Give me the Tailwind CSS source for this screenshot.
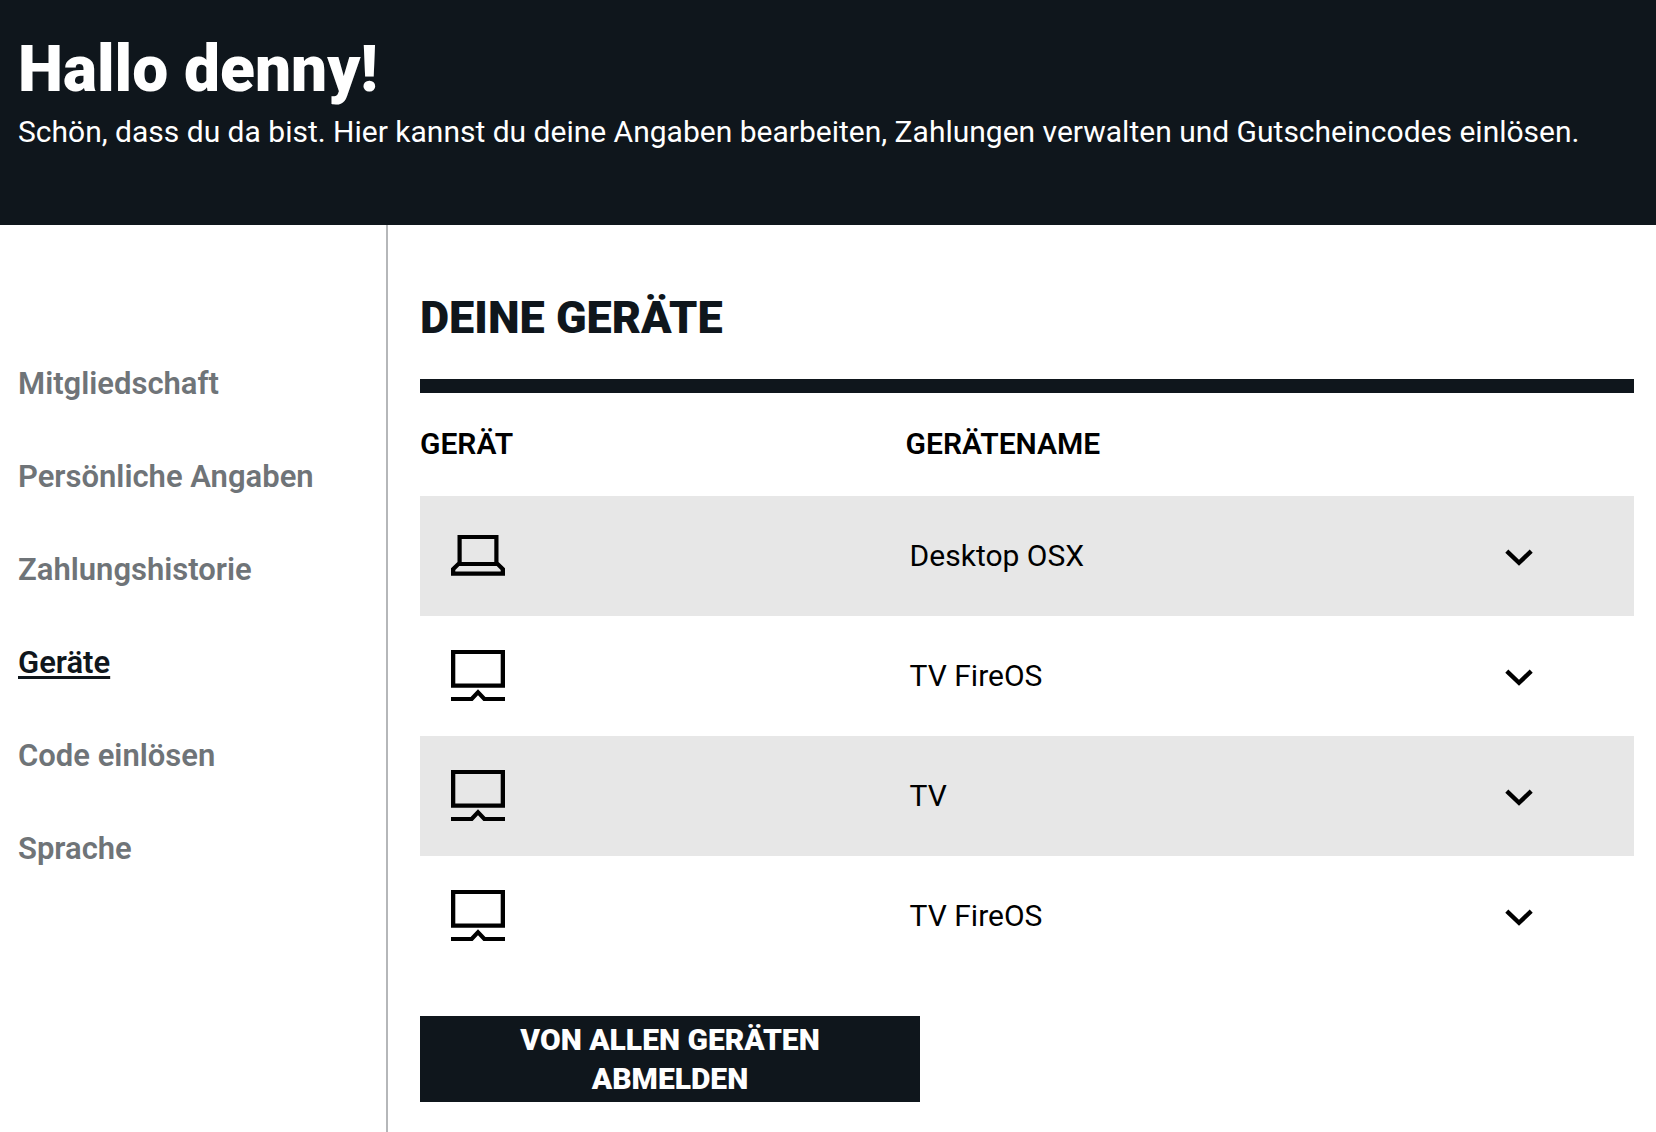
<!DOCTYPE html>
<html lang="de">
    <head>
        <meta charset="UTF-8" />
        <meta name="viewport" content="width=device-width, initial-scale=1.0" />
        <title>Mein Konto - Geräte</title>
        <script src="https://cdn.jsdelivr.net/npm/@tailwindcss/browser@4"></script>
    </head>
    <body
        class="min-h-screen flex flex-col bg-white text-black font-['Roboto',sans-serif] text-[30px] leading-10"
    >
        <!-- Header Section -->
        <header class="bg-[#0f161c] text-white px-[18px] pt-[38px] pb-[73px]">
            <h1 class="text-[64px] leading-16 font-black">Hallo denny!</h1>
            <p class="mt-2.5">
                Schön, dass du da bist. Hier kannst du deine Angaben bearbeiten,
                Zahlungen verwalten und Gutscheincodes einlösen.
            </p>
        </header>

        <div class="flex flex-1">
            <!-- Account Navigation -->
            <nav
                class="w-[388px] shrink-0 border-r-2 border-[#b5b7b9] pl-[18px] pt-[139px]"
            >
                <ul class="flex flex-col gap-[53px] text-[31px] leading-10 font-semibold text-[#6f7478]">
                    <li><a href="#mitgliedschaft">Mitgliedschaft</a></li>
                    <li><a href="#angaben">Persönliche Angaben</a></li>
                    <li><a href="#zahlungen">Zahlungshistorie</a></li>
                    <li>
                        <a
                            href="#geraete"
                            aria-current="page"
                            class="text-[#0f161c] underline decoration-3 underline-offset-3"
                            >Geräte</a
                        >
                    </li>
                    <li><a href="#code">Code einlösen</a></li>
                    <li><a href="#sprache">Sprache</a></li>
                </ul>
            </nav>

            <!-- Devices -->
            <main class="flex-1 pl-8 pr-[22px] pt-[69px] pb-[30px]">
                <h2 class="text-[45px] leading-12 font-black text-[#0f161c]">
                    DEINE GERÄTE
                </h2>

                <div class="mt-[37px] h-3.5 bg-[#0f161c]"></div>
                <table class="w-full table-fixed text-left">
                    <thead>
                        <tr>
                            <th class="w-2/5 pt-[31px] pb-8 font-semibold">GERÄT</th>
                            <th class="w-2/5 pt-[31px] pb-8 font-semibold">GERÄTENAME</th>
                            <th class="w-1/5"></th>
                        </tr>
                    </thead>
                    <tbody>
                        <tr class="h-[120px] bg-[#e7e7e7]">
                            <td class="pl-[31px]">
                                <svg class="size-[54px]" viewBox="0 0 54 54" fill-rule="evenodd" aria-label="Computer">
                                    <path d="M6.5 6H47.5V33L54 39.3V46.7H0V39.3L6.5 33ZM10.7 10V33H43.3V10ZM8.3 37L4.3 41V42.5H49.7V41L45.7 37Z" />
                                </svg>
                            </td>
                            <td class="pl-1">Desktop OSX</td>
                            <td class="pl-3 text-center">
                                <button type="button" aria-label="Desktop OSX öffnen" class="p-3 align-middle">
                                    <svg class="w-7 h-[18px]" viewBox="0 0 28 18" fill="none" stroke="currentColor" stroke-width="4.4">
                                        <path d="M1.8 3.2L14 14.8L26.2 3.2" />
                                    </svg>
                                </button>
                            </td>
                        </tr>
                        <tr class="h-[120px]">
                            <td class="pl-[31px]">
                                <svg class="size-[54px]" viewBox="0 0 54 54" fill-rule="evenodd" aria-label="Fernseher">
                                    <path d="M0 1H54V38.7H0ZM4.3 5V34.5H49.7V5ZM0 48H19.6L27 40.3L34.4 48H54V52H32.4L27 46.2L21.6 52H0Z" />
                                </svg>
                            </td>
                            <td class="pl-1">TV FireOS</td>
                            <td class="pl-3 text-center">
                                <button type="button" aria-label="TV FireOS öffnen" class="p-3 align-middle">
                                    <svg class="w-7 h-[18px]" viewBox="0 0 28 18" fill="none" stroke="currentColor" stroke-width="4.4">
                                        <path d="M1.8 3.2L14 14.8L26.2 3.2" />
                                    </svg>
                                </button>
                            </td>
                        </tr>
                        <tr class="h-[120px] bg-[#e7e7e7]">
                            <td class="pl-[31px]">
                                <svg class="size-[54px]" viewBox="0 0 54 54" fill-rule="evenodd" aria-label="Fernseher">
                                    <path d="M0 1H54V38.7H0ZM4.3 5V34.5H49.7V5ZM0 48H19.6L27 40.3L34.4 48H54V52H32.4L27 46.2L21.6 52H0Z" />
                                </svg>
                            </td>
                            <td class="pl-1">TV</td>
                            <td class="pl-3 text-center">
                                <button type="button" aria-label="TV öffnen" class="p-3 align-middle">
                                    <svg class="w-7 h-[18px]" viewBox="0 0 28 18" fill="none" stroke="currentColor" stroke-width="4.4">
                                        <path d="M1.8 3.2L14 14.8L26.2 3.2" />
                                    </svg>
                                </button>
                            </td>
                        </tr>
                        <tr class="h-[120px]">
                            <td class="pl-[31px]">
                                <svg class="size-[54px]" viewBox="0 0 54 54" fill-rule="evenodd" aria-label="Fernseher">
                                    <path d="M0 1H54V38.7H0ZM4.3 5V34.5H49.7V5ZM0 48H19.6L27 40.3L34.4 48H54V52H32.4L27 46.2L21.6 52H0Z" />
                                </svg>
                            </td>
                            <td class="pl-1">TV FireOS</td>
                            <td class="pl-3 text-center">
                                <button type="button" aria-label="TV FireOS öffnen" class="p-3 align-middle">
                                    <svg class="w-7 h-[18px]" viewBox="0 0 28 18" fill="none" stroke="currentColor" stroke-width="4.4">
                                        <path d="M1.8 3.2L14 14.8L26.2 3.2" />
                                    </svg>
                                </button>
                            </td>
                        </tr>
                    </tbody>
                </table>

                <button
                    type="button"
                    class="mt-10 w-[500px] px-20 py-1 bg-[#0f161c] text-white font-black leading-[39px]"
                >
                    VON ALLEN GERÄTEN ABMELDEN
                </button>
            </main>
        </div>
    </body>
</html>
